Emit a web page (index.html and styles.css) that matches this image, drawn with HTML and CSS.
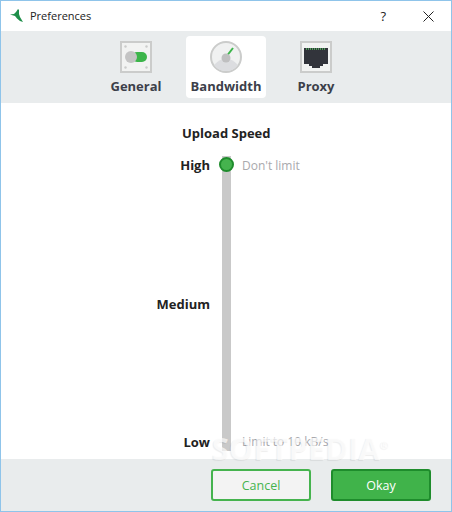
FILE: index.html
```html
<!DOCTYPE html>
<html lang="en">
<head>
    <meta charset="UTF-8">
    <title>Preferences</title>
    <link rel="stylesheet" href="styles.css">
</head>
<body>
    <div class="window">
        <div class="titlebar">
            <svg class="app-icon" width="14" height="14" viewBox="0 0 14 14">
                <path d="M0 5.5 L4 5 L6 3 L8 0 L9 1 L9 5 L10 8 L13 13 L10 12 L7 9.5 L5 7 Z" fill="#1f8f4a"/>
            </svg>
            <span class="title">Preferences</span>
            <span class="help">?</span>
            <svg class="close" width="11" height="11" viewBox="0 0 11 11">
                <path d="M0.5 0.5 L10.5 10.5 M10.5 0.5 L0.5 10.5" stroke="#222" stroke-width="1" fill="none"/>
            </svg>
        </div>

        <div class="tabs">
            <div class="tab">
                <svg width="32" height="32" viewBox="0 0 32 32">
                    <rect x="1" y="1" width="30" height="30" fill="#f2f3f2" stroke="#cbcccb" stroke-width="2"/>
                    <circle cx="5.5" cy="5.5" r="1.2" fill="#cbcccb"/>
                    <circle cx="26.5" cy="5.5" r="1.2" fill="#cbcccb"/>
                    <circle cx="5.5" cy="26.5" r="1.2" fill="#cbcccb"/>
                    <circle cx="26.5" cy="26.5" r="1.2" fill="#cbcccb"/>
                    <rect x="12" y="11" width="15" height="10" rx="5" fill="#3cb54a"/>
                    <circle cx="11" cy="16" r="6" fill="#c4c4c4"/>
                </svg>
                <span class="tab-label">General</span>
            </div>
            <div class="tab active">
                <svg width="32" height="32" viewBox="0 0 32 32">
                    <circle cx="16" cy="16" r="15" fill="#f0f1f1" stroke="#cbcccb" stroke-width="2"/>
                    <path d="M4 24 Q16 11 28 24 A15 15 0 0 1 4 24 Z" fill="#dcdde0"/>
                    <path d="M16 16 L23 7" stroke="#3cb54a" stroke-width="2"/>
                    <circle cx="16" cy="17" r="4.5" fill="#bfbfc0"/>
                </svg>
                <span class="tab-label">Bandwidth</span>
            </div>
            <div class="tab">
                <svg width="32" height="32" viewBox="0 0 32 32">
                    <rect x="1" y="1" width="30" height="30" fill="#f2f3f2" stroke="#cbcccb" stroke-width="2"/>
                    <path d="M4 7 H28 V23 H23 V25 H20 V27 H12 V25 H9 V23 H4 Z" fill="#32343b"/>
                    <path d="M6 8 H26" stroke="#4f9f58" stroke-width="2" stroke-dasharray="1 1"/>
                </svg>
                <span class="tab-label">Proxy</span>
            </div>
        </div>

        <div class="content">
            <h3 class="speed-title">Upload Speed</h3>
            <div class="speed">
                <div class="levels">
                    <span>High</span>
                    <span>Medium</span>
                    <span>Low</span>
                </div>
                <div class="track">
                    <div class="handle"></div>
                </div>
                <div class="limits">
                    <span>Don't limit</span>
                    <span>Limit to 10 kB/s</span>
                </div>
            </div>
        </div>

        <div class="footer">
            <button class="btn cancel">Cancel</button>
            <button class="btn okay">Okay</button>
        </div>

        <div class="watermark">SOFTPEDIA<sup>®</sup></div>
    </div>
</body>
</html>
```

FILE: styles.css
```css
* {
    margin: 0;
    padding: 0;
    box-sizing: border-box;
}

html, body {
    width: 452px;
    height: 512px;
    overflow: hidden;
}

body {
    font-family: "Open Sans", "Noto Sans", sans-serif;
    background: white;
}

.window {
    position: relative;
    width: 452px;
    height: 512px;
    display: flex;
    flex-direction: column;
    border: 1px solid #8fc4ea;
}

.titlebar {
    height: 30px;
    flex: none;
    display: flex;
    align-items: center;
    background: white;
    padding-left: 9px;
}

.app-icon {
    margin-right: 6px;
}

.title {
    font-size: 11px;
    color: #222;
    margin-bottom: 2px;
}

.help {
    margin-left: auto;
    font-size: 13px;
    color: #222;
    margin-right: 37px;
}

.close {
    margin-right: 17px;
}

.tabs {
    height: 72px;
    flex: none;
    display: flex;
    justify-content: center;
    gap: 10px;
    padding: 5px 0;
    background: #e9eced;
}

.tab {
    width: 80px;
    height: 62px;
    display: flex;
    flex-direction: column;
    align-items: center;
    padding-top: 5px;
    border-radius: 4px;
}

.tab.active {
    background: white;
}

.tab-label {
    font-size: 13px;
    font-weight: 700;
    color: #3c3f4a;
    margin-top: 4px;
    white-space: nowrap;
}

.content {
    flex: 1;
    background: white;
    padding-top: 21px;
    overflow: hidden;
}

.speed-title {
    font-size: 13px;
    font-weight: 700;
    color: #222;
    margin-left: 181px;
    line-height: 18px;
}

.speed {
    display: flex;
    margin-top: 14px;
    height: 295px;
}

.levels {
    width: 209px;
    display: flex;
    flex-direction: column;
    justify-content: space-between;
    align-items: flex-end;
    font-size: 13px;
    font-weight: 700;
    color: #222;
    line-height: 18px;
}

.track {
    position: relative;
    width: 9px;
    margin-left: 12px;
    background: #c9c9c9;
}

.handle {
    position: absolute;
    top: 1px;
    left: -3px;
    width: 15px;
    height: 15px;
    border-radius: 50%;
    background: #45b34e;
    border: 2px solid #1e8c2c;
}

.limits {
    margin-left: 11px;
    padding-top: 1px;
    display: flex;
    flex-direction: column;
    justify-content: space-between;
    font-size: 12px;
    color: #a9a9ad;
    line-height: 18px;
}

.watermark {
    position: absolute;
    left: 211px;
    top: 430px;
    font-size: 31px;
    font-weight: 700;
    line-height: 34px;
    color: rgba(255, 255, 255, 0.7);
    text-shadow: -1px 1px 1px rgba(0, 0, 0, 0.07);
    white-space: nowrap;
}

.watermark sup {
    font-size: 11px;
    line-height: 0;
}

.footer {
    height: 52px;
    flex: none;
    display: flex;
    justify-content: flex-end;
    align-items: center;
    gap: 20px;
    background: #e9eced;
    padding-right: 20px;
}

.btn {
    width: 100px;
    height: 32px;
    border-radius: 3px;
    font-family: inherit;
    font-size: 12.5px;
}

.btn.cancel {
    background: #f3f3f3;
    border: 2px solid #45b34e;
    color: #45b34e;
}

.btn.okay {
    background: #40b34a;
    border: 2px solid #1e8c2c;
    color: white;
}
```
